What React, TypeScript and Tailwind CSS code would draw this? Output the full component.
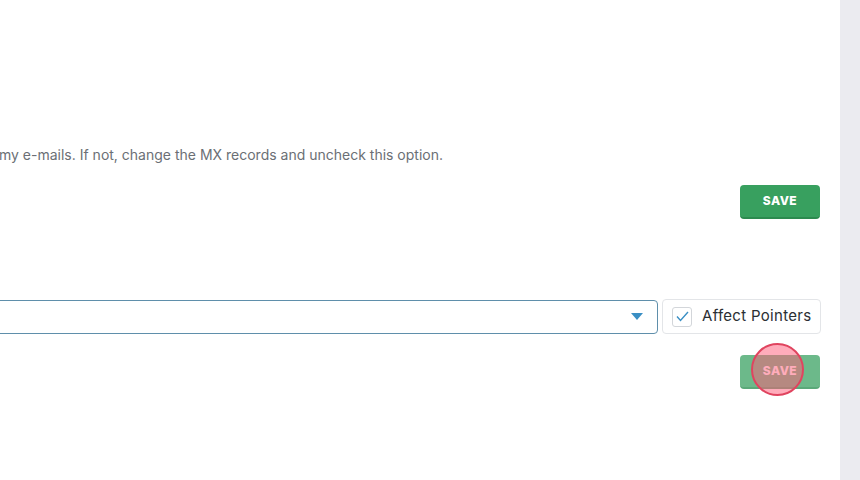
import React from 'react';

const font = { fontFamily: 'Inter, "Noto Sans", sans-serif' };

const SaveButton: React.FC<{ faded?: boolean }> = ({ faded }) => (
  <button
    type="button"
    className={
      faded
        ? 'w-[80px] h-[34px] rounded-[4px] bg-[#6cb98a] border-b-2 border-[#5aa979] text-white text-[12px] font-extrabold tracking-[0.04em]'
        : 'w-[80px] h-[34px] rounded-[4px] bg-[#38a05f] border-b-2 border-[#2c8a4f] text-white text-[12px] font-extrabold tracking-[0.04em]'
    }
  >
    SAVE
  </button>
);

const App: React.FC = () => {
  return (
    <div className="w-[860px] h-[480px] flex bg-white overflow-hidden" style={font}>
      {/* Main content */}
      <div className="w-[840px] h-full flex flex-col">
        {/* MX notice */}
        <div className="pt-[144px] h-[185px] overflow-hidden whitespace-nowrap">
          <p className="text-[14px] text-[#6b6f75] -ml-[1px]">
            my e-mails. If not, change the MX records and uncheck this option.
          </p>
        </div>
        <div className="flex justify-end pr-[20px]">
          <SaveButton />
        </div>

        {/* Forward row */}
        <div className="mt-[80px] flex items-center pr-[19px] gap-[4px]">
          <div className="flex-1 h-[34px] -ml-[4px] border border-[#5f8fab] rounded-[4px] flex items-center justify-end pr-[14px]">
            <svg width="12" height="7" viewBox="0 0 12 7">
              <path d="M0 0 L12 0 L6 7 Z" fill="#3a8fc4" />
            </svg>
          </div>
          <label className="h-[35px] w-[159px] border border-[#e3e5e8] rounded-[4px] flex items-center pl-[9px] gap-[10px]">
            <span className="w-[20px] h-[20px] border border-[#d3d6da] rounded-[3px] flex items-center justify-center">
              <svg width="13" height="11" viewBox="0 0 13 11">
                <path d="M1 5.5 L4.5 9.5 L12 1" fill="none" stroke="#3a8fc4" strokeWidth="1.4" />
              </svg>
            </span>
            <span className="text-[15px] tracking-[0.3px] text-[#2b2f33]">Affect Pointers</span>
          </label>
        </div>

        <div className="mt-[21px] flex justify-end pr-[20px]">
          <div className="relative">
            <SaveButton faded />
            <span className="absolute left-[11px] top-[-12px] w-[53px] h-[53px] rounded-full bg-[#ff5a78]/50 border-2 border-[#e0445f] pointer-events-none" />
          </div>
        </div>
      </div>

      {/* Right gutter */}
      <div className="w-[20px] h-full bg-[#ebebf0]" />
    </div>
  );
};

export default App;
